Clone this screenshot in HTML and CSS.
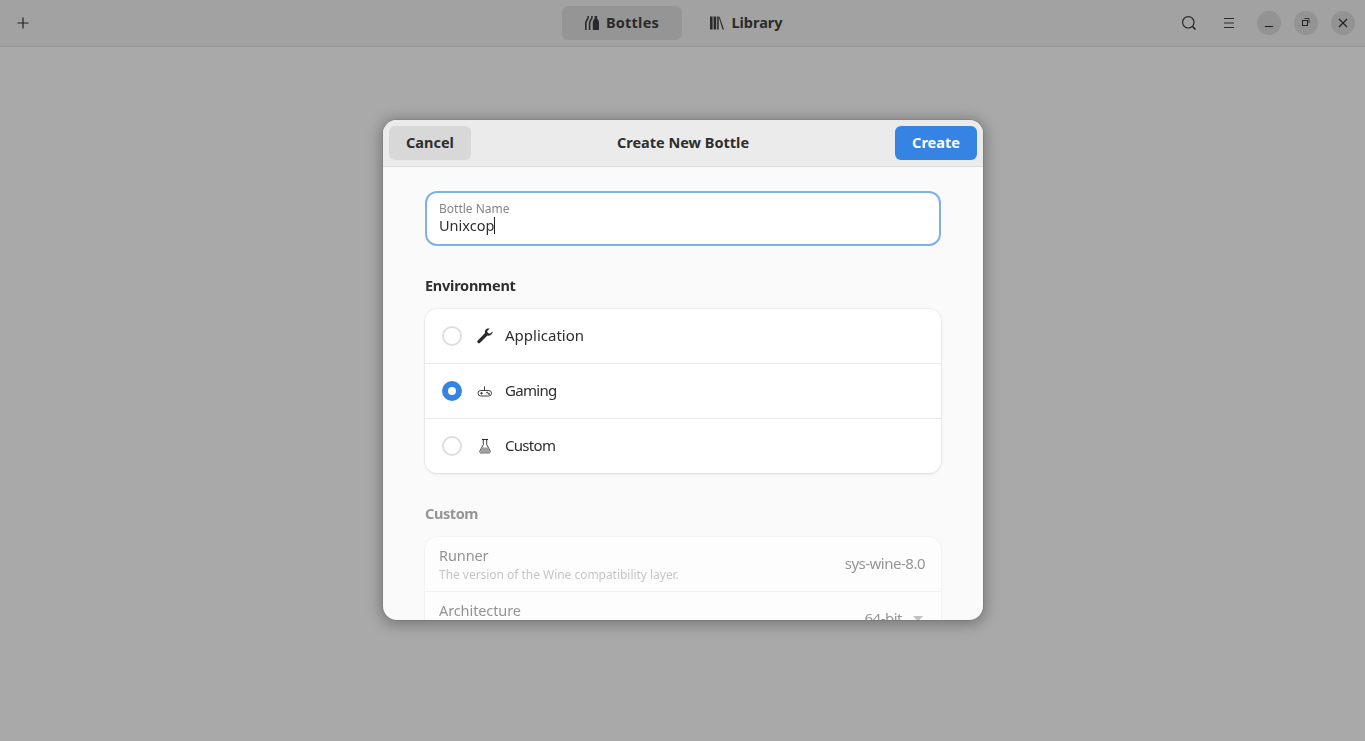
FILE: index.html
```html
<!DOCTYPE html>
<html lang="en">
<head>
<meta charset="utf-8">
<title>Bottles</title>
<link rel="stylesheet" href="styles.css">
</head>
<body>
<div class="window">
  <header class="topbar">
    <button class="tb-icon add" aria-label="New"><svg width="16" height="16" viewBox="0 0 16 16"><path d="M8 2.500v11M2.500 8h11" stroke="#222" stroke-width="1.200" fill="none"/></svg></button>
    <nav class="switcher">
      <div class="tab active">
        <svg width="14" height="16" viewBox="0 0 14 16" fill="#2a2a2a"><path d="M2.400 1h1.500v2.300C2.500 5.600 1.600 7 1.600 9v6H0V9c0-2.400.9-4.200 2.400-5.900z"/><path d="M6.200 1h1.500v2.300C6.300 5.600 5.400 7 5.400 9v6H3.800V9c0-2.400.9-4.200 2.400-5.900z"/><path d="M9.700 1h2.400v2.500c1.300 1.300 1.900 2.800 1.900 4.500v7H7.800V8c0-1.700.6-3.200 1.900-4.500z"/></svg>
        <span class="tab-label wide">Bottles</span>
      </div>
      <div class="tab shifted">
        <svg width="14" height="16" viewBox="0 0 14 16" fill="#2a2a2a"><path d="M0 1.500h2.600v13H0zM3.600 1.500h2.600v13H3.600zM7.200 1.500h1.500v13H7.200z"/><path d="M9.500 1.500l4.500 13h-1.500L8.900 2.500z"/></svg>
        <span class="tab-label">Library</span>
      </div>
    </nav>
    <div class="actions">
      <button class="tb-icon" aria-label="Search"><svg width="16" height="16" viewBox="0 0 16 16" fill="none" stroke="#2a2a2a" stroke-width="1.200"><circle cx="7.300" cy="7.300" r="5.700"/><path d="M11.500 11.500l3 3" stroke-width="1.700"/></svg></button>
      <button class="tb-icon menu" aria-label="Menu"><svg width="16" height="16" viewBox="0 0 16 16" stroke="#2a2a2a" stroke-width="1.100"><path d="M3 3.500h10M3 8h10M3 12.500h10"/></svg></button>
      <div class="win-controls">
        <button class="win-btn" aria-label="Minimize"><svg width="12" height="12" viewBox="0 0 12 12" stroke="#222" stroke-width="1.100"><path d="M2 9.500h8"/></svg></button>
        <button class="win-btn" aria-label="Restore"><svg width="12" height="12" viewBox="0 0 12 12" fill="none" stroke="#222"><rect x="2.500" y="3.500" width="5" height="5"/><path d="M4.500 1.500h4.500v4.500" stroke-width=".8"/></svg></button>
        <button class="win-btn" aria-label="Close"><svg width="12" height="12" viewBox="0 0 12 12" stroke="#222" stroke-width="1.200"><path d="M2 2l8 8M10 2l-8 8"/></svg></button>
      </div>
    </div>
  </header>
  <main class="page"></main>
</div>

<div class="overlay">
  <section class="dialog">
    <div class="dlg-head">
      <button class="btn cancel">Cancel</button>
      <h1 class="dlg-title">Create New Bottle</h1>
      <button class="btn create">Create</button>
    </div>
    <div class="dlg-body">
      <div class="name-entry">
        <div class="entry-label">Bottle Name</div>
        <div class="entry-value">Unixcop<span class="caret"></span></div>
      </div>

      <h2 class="group-title env">Environment</h2>
      <div class="list">
        <div class="row">
          <span class="radio"></span>
          <svg class="row-icon" width="16" height="16" viewBox="0 0 16 16" fill="#2a2a2a"><path d="M15.600 3.600l-2.600 2.200-2.200-.7-.6-2.100L12.700.7c-1.700-.5-3.300 0-4.200 1.200-.7 1-.8 2.100-.5 3.100L.8 12.600c-.7.800-.6 1.700.1 2.300.7.600 1.500.6 2.200-.1l7.400-7.200c1.100.3 2.300.1 3.300-.6 1.400-1 2-2.500 1.800-3.400z"/></svg>
          <span class="row-label">Application</span>
        </div>
        <div class="row">
          <span class="radio checked"></span>
          <svg class="row-icon" width="16" height="16" viewBox="0 0 16 16" fill="none" stroke="#2a2a2a" stroke-width=".9"><path d="M7.500 3.500v4"/><rect x="1" y="7.500" width="13.500" height="5.500" rx="2.700"/><path d="M3 10.200h3M4.500 8.900v2.700" stroke-width=".8"/><circle cx="10.200" cy="9.600" r=".6"/><circle cx="12" cy="10.900" r=".6"/></svg>
          <span class="row-label tight">Gaming</span>
        </div>
        <div class="row">
          <span class="radio"></span>
          <svg class="row-icon" width="16" height="16" viewBox="0 0 16 16"><path d="M5 1.500h6" stroke="#2a2a2a" stroke-width="1.100"/><path d="M6.300 2v4.500L2.900 13c-.5 1 .1 1.900 1.100 1.900h8c1 0 1.600-.9 1.100-1.900L9.700 6.500V2" fill="none" stroke="#2a2a2a" stroke-width=".9"/><path d="M5 9.500h6l2 5H3z" fill="#a0a0a0"/></svg>
          <span class="row-label tight">Custom</span>
        </div>
      </div>

      <div class="custom-section">
        <h2 class="group-title dim">Custom</h2>
        <div class="list">
          <div class="row detail">
            <div class="row-text">
              <div class="row-title">Runner</div>
              <div class="row-sub">The version of the Wine compatibility layer.</div>
            </div>
            <span class="row-value">sys-wine-8.0</span>
          </div>
          <div class="row detail">
            <div class="row-text">
              <div class="row-title">Architecture</div>
              <div class="row-sub">32-bit should only be used if strictly necessary.</div>
            </div>
            <span class="row-value">64-bit</span>
            <svg class="caret-down" width="10" height="6" viewBox="0 0 10 6" fill="#8a8a8a"><path d="M0 0h10L5 5.500z"/></svg>
          </div>
        </div>
      </div>
    </div>
  </section>
</div>
</body>
</html>
```

FILE: styles.css
```css
* { box-sizing: border-box; }
html, body { margin: 0; height: 100%; overflow: hidden; }
body {
  font-family: "Noto Sans", "Open Sans", "Liberation Sans", sans-serif;
  font-size: 15px;
  color: #2a2a2a;
  background: #a9a9a9;
}
button { font: inherit; border: 0; background: none; padding: 0; color: inherit; }
h1, h2 { margin: 0; }

.window { height: 100%; display: flex; flex-direction: column; }
.topbar {
  height: 47px;
  flex: none;
  display: flex;
  align-items: center;
  justify-content: space-between;
  background: #a2a2a2;
  border-bottom: 1px solid #969696;
  padding: 0 10px 1px 15px;
  position: relative;
}
.page { flex: 1; background: #a9a9a9; }
.tb-icon { width: 16px; height: 16px; display: flex; }
.switcher {
  position: absolute;
  left: 562px;
  top: 6px;
  display: flex;
  gap: 2px;
}
.tab {
  height: 34px;
  width: 120px;
  border-radius: 6px;
  display: flex;
  align-items: center;
  justify-content: center;
  gap: 7px;
  font-weight: 700;
  font-size: 14.500px;
}
.tab-label { padding-bottom: 2px; }
.tab-label.wide { letter-spacing: .2px; }
.tab.shifted { padding-left: 5px; }
.tab.active { background: #959595; }
.actions { display: flex; align-items: center; }
.menu { margin-left: 24px; }
.win-controls { display: flex; gap: 13px; margin-left: 20px; }
.win-btn {
  width: 24px;
  height: 24px;
  border-radius: 50%;
  background: #939393;
  display: flex;
  align-items: center;
  justify-content: center;
}

.overlay {
  position: fixed;
  inset: 0;
  padding: 0 0 1px 1px;
  display: flex;
  align-items: center;
  justify-content: center;
}
.dialog {
  width: 600px;
  height: 500px;
  border-radius: 14px;
  background: #fafafa;
  overflow: hidden;
  display: flex;
  flex-direction: column;
  box-shadow: 0 0 0 1px rgba(0,0,0,.08), 0 2px 14px 3px rgba(0,0,0,.28);
}
.dlg-head {
  height: 47px;
  flex: none;
  display: flex;
  align-items: center;
  justify-content: space-between;
  padding: 0 6px;
  background: #ebebeb;
  border-bottom: 1px solid #dcdcdc;
}
.btn {
  width: 82px;
  height: 34px;
  border-radius: 6px;
  font-weight: 700;
  font-size: 14.500px;
  padding-bottom: 2px;
}
.cancel { background: #d8d8d8; color: #2e2e2e; }
.create { background: #3584e4; color: #fff; }
.dlg-title { font-size: 14.500px; font-weight: 700; color: #2e2e2e; padding-bottom: 2px; }
.dlg-body { flex: 1; overflow: hidden; padding: 24px 42px 0; }

.name-entry {
  height: 55px;
  background: #fff;
  border: 2px solid #7fb0ea;
  border-radius: 12px;
  padding: 8px 12px 0;
}
.entry-label { font-size: 12px; line-height: 15px; color: #858585; }
.entry-value { font-size: 14.500px; line-height: 20px; margin-top: -1px; color: #2e2e2e; }
.caret { display: inline-block; width: 1px; height: 17px; background: #222; vertical-align: -3px; }

.group-title { font-size: 14.500px; font-weight: 700; line-height: 20px; margin: 29px 0 14px; color: #2e2e2e; letter-spacing: -.4px; }
.group-title.env { letter-spacing: -.25px; }
.list {
  background: #fff;
  border-radius: 12px;
  box-shadow: 0 0 0 1px rgba(0,0,0,.035), 0 1px 3px rgba(0,0,0,.1);
}
.row {
  height: 55px;
  display: flex;
  align-items: center;
  padding: 0 16px 0 17px;
  border-top: 1px solid #e9e9e9;
}
.row:first-child { border-top: 0; height: 54px; }
.radio {
  width: 20px;
  height: 20px;
  border-radius: 50%;
  border: 2px solid #dedede;
  background: #fff;
  flex: none;
}
.radio.checked { background: #fff; border: 6px solid #3584e4; }
.row-icon { margin-left: 15px; flex: none; }
.row-label { margin-left: 12px; margin-bottom: 2px; font-size: 15px; color: #2e2e2e; }
.row-label.tight { letter-spacing: -.7px; }

.custom-section { opacity: .5; }
.custom-section .group-title { margin-top: 30px; }
.detail { padding: 0 16px 0 14px; justify-content: space-between; }
.row-text { flex: 1; min-width: 0; }
.row-title { font-size: 14.500px; line-height: 20px; letter-spacing: -.1px; }
.row-sub { font-size: 12px; line-height: 16px; margin-top: 2px; padding-bottom: 1px; color: #8f8f8f; white-space: nowrap; letter-spacing: -.03px; }
.row-value { font-size: 15px; color: #2e2e2e; letter-spacing: -.5px; margin-bottom: 2px; }
.caret-down { margin-left: 11px; margin-right: 2px; }
```
